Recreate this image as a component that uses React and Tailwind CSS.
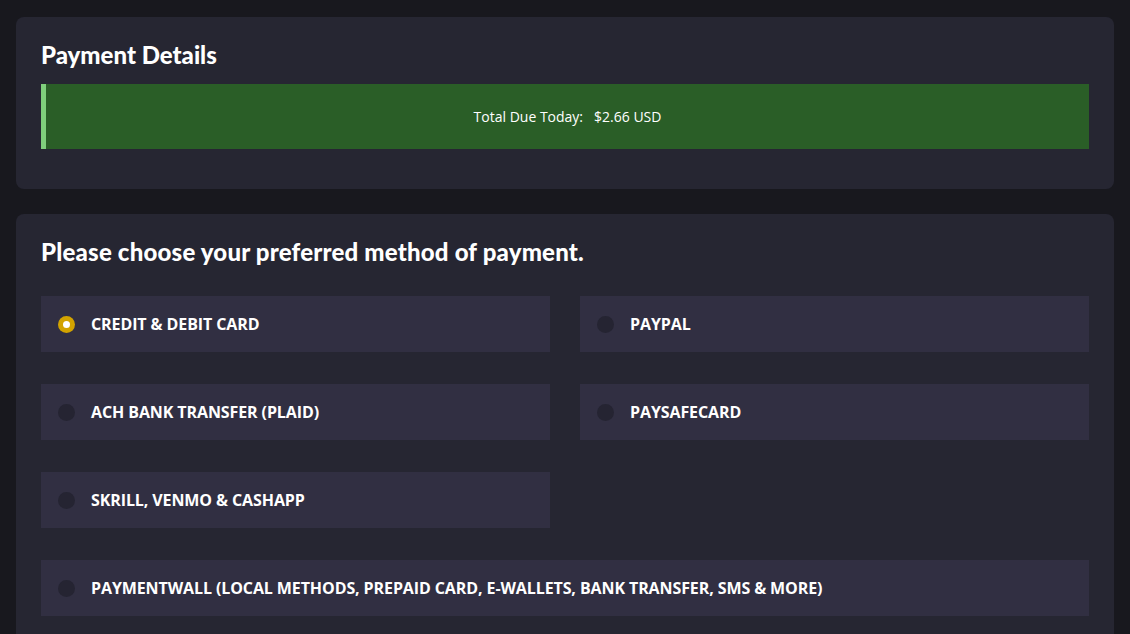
const methods = [
  { id: 'card', label: 'CREDIT & DEBIT CARD', checked: true },
  { id: 'paypal', label: 'PAYPAL' },
  { id: 'ach', label: 'ACH BANK TRANSFER (PLAID)' },
  { id: 'psc', label: 'PAYSAFECARD' },
  { id: 'skrill', label: 'SKRILL, VENMO & CASHAPP' },
]

const Option = ({ label, checked, wide }) => (
  <div className={`flex items-center h-[56px] bg-[#312f42] pl-[17px] ${wide ? 'col-span-2' : ''}`}>
    {checked ? (
      <span className="w-[17px] h-[17px] rounded-full bg-[#d2a300] flex items-center justify-center">
        <span className="w-[7px] h-[7px] rounded-full bg-white"></span>
      </span>
    ) : (
      <span className="w-[17px] h-[17px] rounded-full bg-[#252432]"></span>
    )}
    <span className="ml-[16px] text-white text-[16px] font-bold font-['Open_Sans',sans-serif] tracking-[-0.1px]">
      {label}
    </span>
  </div>
)

export default function App() {
  return (
    <div className="min-h-screen bg-[#18181e] px-[16px] pt-[17px] pb-8 font-['Open_Sans',sans-serif]">
      <div className="w-[1098px] rounded-lg bg-[#262632] px-[25px] pt-[23px] pb-[40px]">
        <h2 className="text-white text-[24px] font-black font-['Lato',sans-serif] leading-[29px]">
          Payment Details
        </h2>
        <div className="mt-[15px] h-[65px] bg-[#2a5e27] border-l-[5px] border-[#7fcf7c] flex items-center justify-center">
          <span className="text-white text-[14px]">Total Due Today:</span>
          <span className="text-white text-[14px] ml-[11px]">$2.66 USD</span>
        </div>
      </div>

      <div className="mt-[25px] w-[1098px] rounded-lg bg-[#262632] px-[25px] pt-[23px] pb-[40px]">
        <h2 className="text-white text-[24px] font-black font-['Lato',sans-serif] leading-[29px] tracking-[0.2px]">
          Please choose your preferred method of payment.
        </h2>
        <div className="mt-[30px] grid grid-cols-2 gap-x-[30px] gap-y-[32px]">
          {methods.map((m) => (
            <Option key={m.id} label={m.label} checked={m.checked} />
          ))}
          <div></div>
          <Option wide label="PAYMENTWALL (LOCAL METHODS, PREPAID CARD, E-WALLETS, BANK TRANSFER, SMS & MORE)" />
        </div>
      </div>
    </div>
  )
}
